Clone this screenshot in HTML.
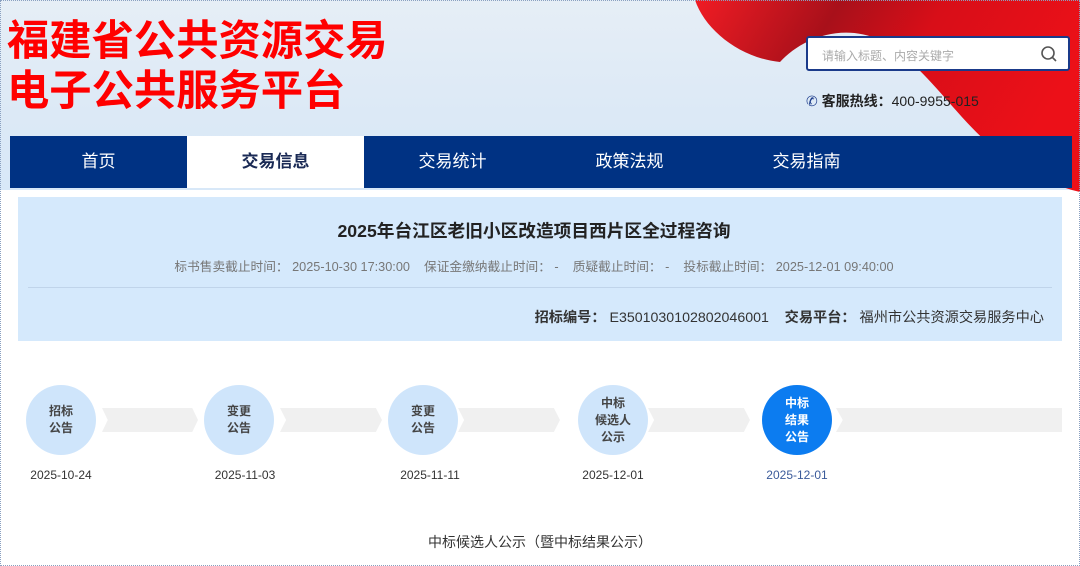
<!DOCTYPE html>
<html><head><meta charset="utf-8"><style>
*{margin:0;padding:0;box-sizing:border-box}
body{width:1080px;height:566px;overflow:hidden;font-family:"Liberation Sans","Noto Sans CJK SC",sans-serif;background:#fff;position:relative}
.hdr{position:absolute;left:0;top:0;width:1080px;height:190px;background:linear-gradient(180deg,#e6eef6 0%,#dce9f6 60%,#d8e8f8 100%)}
.t1{position:absolute;left:7px;top:16px;font-size:42.3px;font-weight:bold;color:#f00;line-height:50px;white-space:nowrap}
.search{position:absolute;left:806px;top:36px;width:264px;height:35px;background:#fff;border:2px solid #1a3a8a;border-radius:3px;font-size:12px;color:#aaa;padding:9px 14px}
.hot{position:absolute;left:806px;top:91px;font-size:14px;color:#222}
.nav{position:absolute;left:10px;top:136px;width:1062px;height:52px;background:#003283;display:flex}
.nav div{width:177px;text-align:center;color:#fff;font-size:17px;line-height:52px}
.nav .on{background:#fff;color:#1a2a55;font-weight:bold}
.box{position:absolute;left:18px;top:197px;width:1044px;height:144px;background:#d5e9fc}
.ttl{position:absolute;top:20px;width:100%;text-align:center;font-size:17.7px;font-weight:bold;color:#222;padding-right:12px}
.sub{position:absolute;top:59px;width:100%;text-align:center;font-size:12.7px;color:#777;padding-right:12px}
.line{position:absolute;left:10px;right:10px;top:90px;border-top:1px solid #c0d4ea}
.code{position:absolute;right:18px;top:110px;font-size:14.2px;color:#333}
.c{position:absolute;width:70px;height:70px;border-radius:50%;background:#cfe5fb;color:#444;font-size:12px;font-weight:bold;display:flex;align-items:center;justify-content:center;text-align:center;line-height:17px}
.c.a{background:#0c7cf0;color:#fff}
.ar{position:absolute;top:408px;height:24px;background:#f0f0f0;clip-path:polygon(0 0,94% 0,100% 50%,94% 100%,0 100%,6% 50%)}
.d{position:absolute;top:468px;font-size:12px;color:#333;width:80px;text-align:center}
.foot{position:absolute;top:532px;width:100%;text-align:center;font-size:14px;color:#333}
.frame{position:absolute;inset:0;border:1px dotted #8aa0c0}
</style></head><body>
<div class="hdr"></div>
<svg style="position:absolute;left:0;top:0" width="1080" height="200" viewBox="0 0 1080 200">
<defs><linearGradient id="g" x1="0" y1="0" x2="1" y2="0.3"><stop offset="0" stop-color="#f01c24"/><stop offset="0.35" stop-color="#a8101a"/><stop offset="0.6" stop-color="#d80e18"/><stop offset="1" stop-color="#ec1018"/></linearGradient></defs>
<path d="M695,0 C705,30 740,58 780,62 C800,40 840,22 880,40 C925,65 950,110 990,145 C1020,170 1050,185 1080,192 L1080,0 Z" fill="url(#g)"/>
</svg>
<div class="t1">福建省公共资源交易<br>电子公共服务平台</div>
<div class="search">请输入标题、内容关键字
<svg style="position:absolute;right:10px;top:7px" width="18" height="18" viewBox="0 0 18 18"><circle cx="8" cy="8" r="6" fill="none" stroke="#555" stroke-width="1.6"/><path d="M12.5 12.5L16 16" stroke="#555" stroke-width="1.6"/></svg></div>
<div class="hot"><span style="color:#1a3a8a">✆</span> <b>客服热线：</b>400-9955-015</div>
<div class="nav"><div>首页</div><div class="on">交易信息</div><div>交易统计</div><div>政策法规</div><div>交易指南</div><div></div></div>
<div class="box">
<div class="ttl">2025年台江区老旧小区改造项目西片区全过程咨询</div>
<div class="sub">标书售卖截止时间： 2025-10-30 17:30:00 &nbsp;&nbsp; 保证金缴纳截止时间： - &nbsp;&nbsp; 质疑截止时间： - &nbsp;&nbsp; 投标截止时间： 2025-12-01 09:40:00</div>
<div class="line"></div>
<div class="code"><b>招标编号：</b> E3501030102802046001 &nbsp;&nbsp; <b>交易平台：</b> 福州市公共资源交易服务中心</div>
</div>
<div class="ar" style="left:102px;width:96px"></div>
<div class="ar" style="left:280px;width:102px"></div>
<div class="ar" style="left:458px;width:102px"></div>
<div class="ar" style="left:648px;width:102px"></div>
<div class="ar" style="left:836px;width:226px;clip-path:polygon(0 0,100% 0,100% 100%,0 100%,3% 50%)"></div>
<div class="c" style="left:26px;top:385px">招标<br>公告</div>
<div class="c" style="left:204px;top:385px">变更<br>公告</div>
<div class="c" style="left:388px;top:385px">变更<br>公告</div>
<div class="c" style="left:578px;top:385px">中标<br>候选人<br>公示</div>
<div class="c a" style="left:762px;top:385px">中标<br>结果<br>公告</div>
<div class="d" style="left:21px">2025-10-24</div>
<div class="d" style="left:205px">2025-11-03</div>
<div class="d" style="left:390px">2025-11-11</div>
<div class="d" style="left:573px">2025-12-01</div>
<div class="d" style="left:757px;color:#3a5a9a">2025-12-01</div>
<div class="foot">中标候选人公示（暨中标结果公示）</div>
<div class="frame"></div>
</body></html>
